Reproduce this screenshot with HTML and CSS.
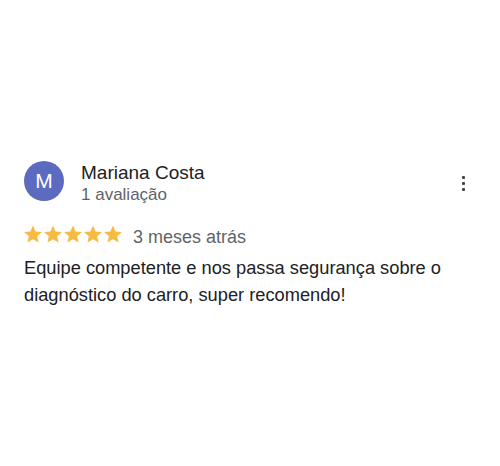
FILE: index.html
```html
<!DOCTYPE html>
<html lang="pt-BR">
<head>
  <title>Avaliação</title>
  <meta charset="UTF-8">
  <meta name="viewport" content="width=device-width, initial-scale=1">
  <link rel="stylesheet" href="styles.css">
</head>
<body>
  <article class="review">
    <div class="review-head">
      <div class="avatar">M</div>
      <div class="author">
        <div class="author-name">Mariana Costa</div>
        <div class="author-meta">1 avaliação</div>
      </div>
      <div class="more" aria-label="Mais opções">
        <span></span><span></span><span></span>
      </div>
    </div>

    <div class="rating">
      <div class="stars">
        <svg viewBox="2 2 20 20"><path d="M12 2.5l2.9 6.6 7.1.6-5.4 4.7 1.6 7-6.2-3.7-6.2 3.7 1.6-7L2 9.7l7.1-.6z"/></svg>
        <svg viewBox="2 2 20 20"><path d="M12 2.5l2.9 6.6 7.1.6-5.4 4.7 1.6 7-6.2-3.7-6.2 3.7 1.6-7L2 9.7l7.1-.6z"/></svg>
        <svg viewBox="2 2 20 20"><path d="M12 2.5l2.9 6.6 7.1.6-5.4 4.7 1.6 7-6.2-3.7-6.2 3.7 1.6-7L2 9.7l7.1-.6z"/></svg>
        <svg viewBox="2 2 20 20"><path d="M12 2.5l2.9 6.6 7.1.6-5.4 4.7 1.6 7-6.2-3.7-6.2 3.7 1.6-7L2 9.7l7.1-.6z"/></svg>
        <svg viewBox="2 2 20 20"><path d="M12 2.5l2.9 6.6 7.1.6-5.4 4.7 1.6 7-6.2-3.7-6.2 3.7 1.6-7L2 9.7l7.1-.6z"/></svg>
      </div>
      <span class="date">3 meses atrás</span>
    </div>

    <p class="review-text">Equipe competente e nos passa segurança sobre o diagnóstico do carro, super recomendo!</p>
  </article>
</body>
</html>
```

FILE: styles.css
```css
:root {
  --text: #202124;
  --muted: #5f6368;
  --avatar: #5c6bc0;
  --star: #f6bb42;
}

body {
  font-family: 'Liberation Sans', Arial, sans-serif;
  background: #fff;
  color: var(--text);
  margin: 0;
  padding: 161px 24px 0 24px;
}

.review {
  width: 452px;
}

.review-head {
  display: flex;
  align-items: flex-start;
}

.avatar {
  width: 40px;
  height: 40px;
  border-radius: 50%;
  background: var(--avatar);
  color: #fff;
  font-size: 21px;
  display: flex;
  align-items: center;
  justify-content: center;
  flex-shrink: 0;
}

.author {
  margin-left: 17px;
  flex: 1;
}

.author-name {
  font-size: 19px;
  line-height: 24px;
}

.author-meta {
  font-size: 17px;
  line-height: 20px;
  color: var(--muted);
}

.more {
  display: flex;
  flex-direction: column;
  gap: 3px;
  padding: 15px 11px 0 0;
}

.more span {
  width: 3px;
  height: 3px;
  background: #444;
  border-radius: 1px;
}

.rating {
  display: flex;
  align-items: flex-start;
  margin-top: 20px;
}

.stars {
  display: flex;
  gap: 2px;
}

.stars svg {
  width: 18px;
  height: 18px;
  fill: var(--star);
}

.date {
  margin-left: 11px;
  font-size: 18px;
  line-height: 24px;
  color: var(--muted);
}

.review-text {
  margin: 5px 0 0;
  font-size: 18.25px;
  line-height: 27px;
}
```
